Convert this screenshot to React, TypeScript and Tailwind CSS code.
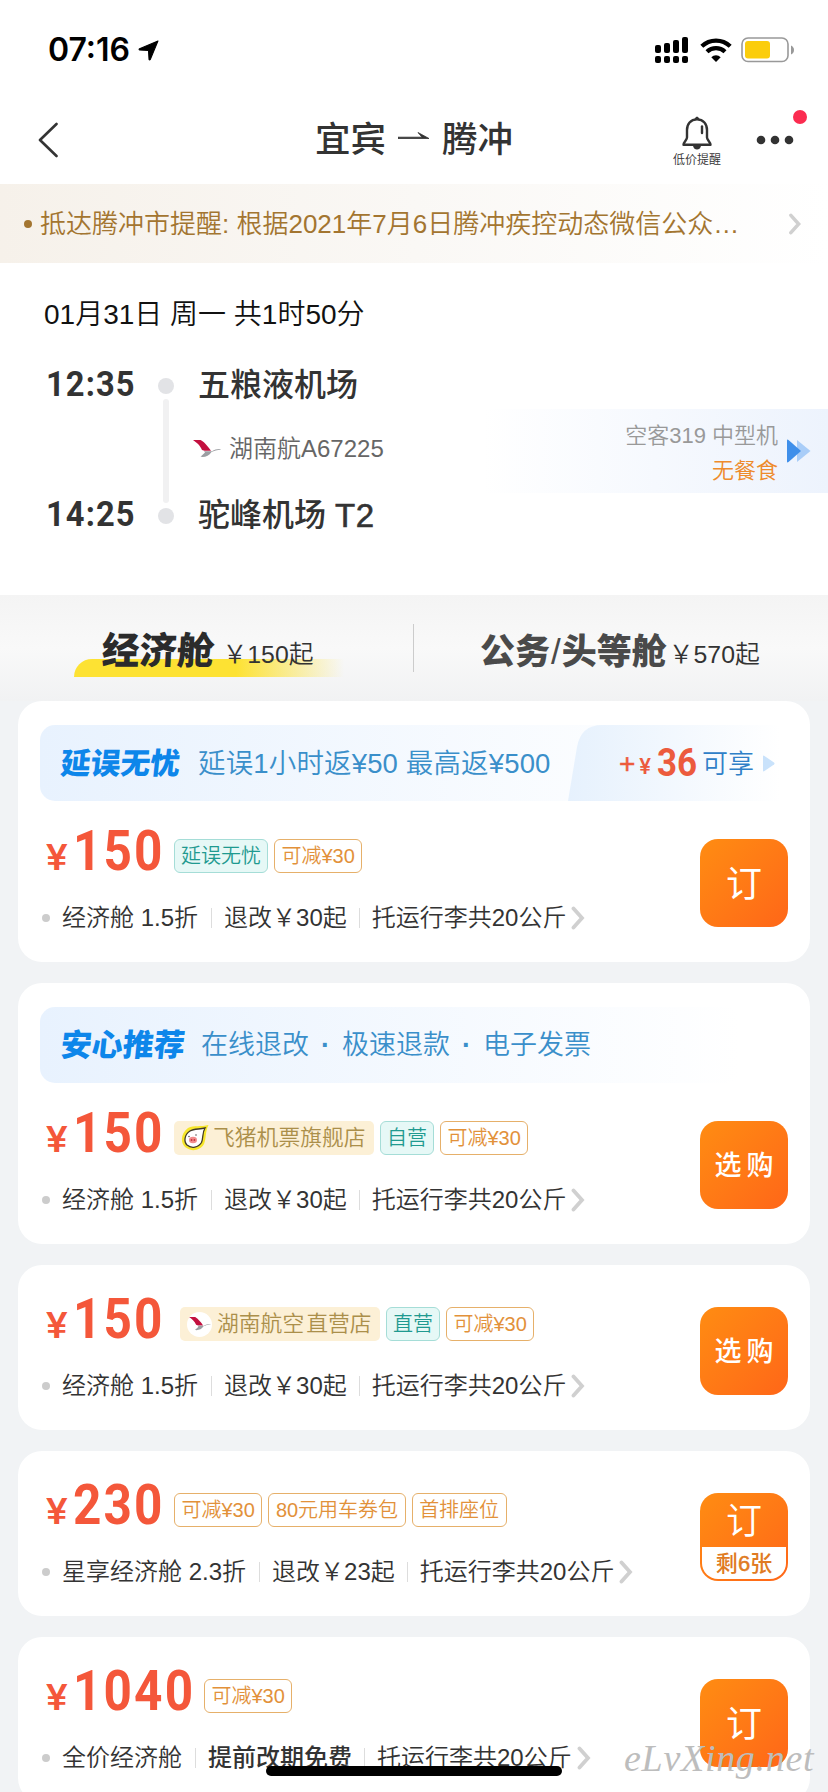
import React from "react";

type Tag = { text: string; kind: "teal" | "orange" | "pig" | "airline" };

type Fare = {
  price: string;
  tags: Tag[];
  cabin: string;
  refund: string;
  refundBold?: boolean;
  action: string;
  left?: string;
  banner?: "delay" | "recommend";
  shiftTags?: boolean;
};

const fares: Fare[] = [
  {
    price: "150",
    tags: [
      { text: "延误无忧", kind: "teal" },
      { text: "可减¥30", kind: "orange" },
    ],
    cabin: "经济舱 1.5折",
    refund: "退改￥30起",
    action: "订",
    banner: "delay",
  },
  {
    price: "150",
    tags: [
      { text: "飞猪机票旗舰店", kind: "pig" },
      { text: "自营", kind: "teal" },
      { text: "可减¥30", kind: "orange" },
    ],
    cabin: "经济舱 1.5折",
    refund: "退改￥30起",
    action: "选购",
    banner: "recommend",
  },
  {
    price: "150",
    tags: [
      { text: "湖南航空 直营店", kind: "airline" },
      { text: "直营", kind: "teal" },
      { text: "可减¥30", kind: "orange" },
    ],
    cabin: "经济舱 1.5折",
    refund: "退改￥30起",
    action: "选购",
    shiftTags: true,
  },
  {
    price: "230",
    tags: [
      { text: "可减¥30", kind: "orange" },
      { text: "80元用车券包", kind: "orange" },
      { text: "首排座位", kind: "orange" },
    ],
    cabin: "星享经济舱 2.3折",
    refund: "退改￥23起",
    action: "订",
    left: "剩6张",
  },
  {
    price: "1040",
    tags: [{ text: "可减¥30", kind: "orange" }],
    cabin: "全价经济舱",
    refund: "提前改期免费",
    refundBold: true,
    action: "订",
  },
];

function Chevron({ className }: { className?: string }) {
  return (
    <svg viewBox="0 0 14 24" className={className} fill="none" stroke="#d0d0d0" strokeWidth="3.8" strokeLinecap="round">
      <path d="M2.5 2.5 L11 12 L2.5 21.5" />
    </svg>
  );
}

function AirlineLogo({ className }: { className?: string }) {
  return (
    <svg viewBox="0 0 28 18" className={className}>
      <path d="M0 0 H7.500 C9.500 0.500 15 6 18 10.800 H11.500 L9 10 C7 5 3.500 2.500 0 0 Z" fill="#c3103f" />
      <path d="M11 11.2 H19 C22 9.5 26 8.5 28 9.4 C24 9.8 21 11 18.5 12 C16 16 12 17.4 7.5 16.8 L12 12.6 Z" fill="#9b9ea2" />
    </svg>
  );
}

function PigLogo({ className }: { className?: string }) {
  return (
    <svg viewBox="0 0 28 26" className={className}>
      <path d="M27.500 0 C20 2 13 0 7 3 C0 8 -1 17 4 22 C10 27 19 26 23 19 C25.500 13 24 7 27.500 0 Z" fill="#f6e62a" />
      <path d="M24 3 C18 4.500 13 3.500 9 6 C3.500 9.500 2.500 16.500 6 20 C10.500 24 17.500 22.500 20.500 17.500 C22.500 13 21 8 24 3 Z" fill="#fff" stroke="#413a28" strokeWidth="1.3" />
      <ellipse cx="12" cy="15" rx="4" ry="3.2" fill="#f28b8b" />
      <circle cx="10.600" cy="15" r="0.9" fill="#c2353b" />
      <circle cx="13.400" cy="15" r="0.9" fill="#c2353b" />
      <circle cx="8" cy="11.500" r="0.7" fill="#333" />
      <circle cx="15" cy="10" r="0.7" fill="#333" />
    </svg>
  );
}

function StatusBar() {
  return (
    <div className="flex h-[100px] items-center pl-[48px] pr-[33px]">
      <span className="w-[84px] whitespace-nowrap font-['Inter',sans-serif] text-[32px] font-semibold leading-none text-black">
        07:16
      </span>
      <svg viewBox="0 0 20 20" className="ml-[6px] h-[21px] w-[21px]">
        <path d="M19 1 L1.500 8.300 Q0.500 9 1.500 9.500 L10 10 L10.500 18.500 Q11 19.500 11.700 18.500 Z" fill="#000" stroke="#000" strokeLinejoin="round" />
      </svg>
      <div className="flex-1" />
      <svg viewBox="0 0 33 26" className="h-[26px] w-[33px]">
        <rect x="0" y="8" width="6" height="8" rx="2" />
        <rect x="9" y="6" width="6" height="10" rx="2" />
        <rect x="18" y="3" width="6" height="13" rx="2" />
        <rect x="27" y="0" width="6" height="16" rx="2" />
        <rect x="0" y="19" width="6" height="7" rx="2" />
        <rect x="9" y="19" width="6" height="7" rx="2" />
        <rect x="18" y="19" width="6" height="7" rx="2" />
        <rect x="27" y="19" width="6" height="7" rx="2" />
      </svg>
      <svg viewBox="0 0 32 24" className="ml-[12px] h-[24px] w-[32px]" fill="none" stroke="#000" strokeWidth="4.200">
        <path d="M1.800 8.300 A20.500 20.500 0 0 1 30.200 8.300" />
        <path d="M7 13.800 A13 13 0 0 1 25 13.800" />
        <path d="M16 24 L11.300 19.300 A6.700 6.700 0 0 1 20.700 19.300 Z" fill="#000" stroke="none" />
      </svg>
      <svg viewBox="0 0 54 26" className="ml-[9px] h-[26px] w-[54px]">
        <rect x="1" y="1" width="46" height="23.500" rx="6" fill="none" stroke="#999" strokeWidth="1.600" />
        <rect x="4" y="4" width="25" height="17.500" rx="3" fill="#fbcd0b" />
        <path d="M50 8.500 Q53 10 53 13 Q53 16 50 17.500 Z" fill="#999" />
      </svg>
    </div>
  );
}

function NavBar() {
  return (
    <div className="flex h-[84px] pl-[38px]">
      <svg viewBox="0 0 20 36" className="mt-[22px] h-[36px] w-[20px]" fill="none" stroke="#333" strokeWidth="2.600" strokeLinecap="round" strokeLinejoin="round">
        <path d="M18.500 2 L2 18 L18.500 34" />
      </svg>
      <div className="ml-[257px] flex h-[78px] items-center text-[35.500px] font-medium leading-none text-[#333]">
        <span className="pt-[4px]">宜宾</span>
        <svg viewBox="0 0 32 10" className="mb-[4px] ml-[12px] mr-[12px] h-[10px] w-[32px]">
          <path d="M0 6.500 H31 L20 0.500 L24 5.200 H0 Z" fill="#333" stroke="#333" strokeWidth="0.800" />
        </svg>
        <span className="pt-[4px]">腾冲</span>
      </div>
      <div className="ml-[159px] flex w-[50px] flex-col items-center pt-[16px]">
        <svg viewBox="0 0 30 34" className="h-[34px] w-[30px] shrink-0" fill="none" stroke="#333" strokeWidth="2.400" strokeLinejoin="round">
          <path d="M15 3.400 C8.500 3.400 5 8 5 14 V21.500 C5 24 1.500 26 1.500 28.800 H28.500 C28.500 26 25 24 25 21.500 V14 C25 8 21.500 3.400 15 3.400 Z" />
          <path d="M20 10.500 V17" strokeLinecap="round" />
          <path d="M12.500 3 Q15 -2 17.500 3 Z" fill="#333" stroke="none" />
          <path d="M11 30 H19 Q18 33.500 15 33.500 Q12 33.500 11 30 Z" fill="#333" stroke="none" />
        </svg>
        <span className="mt-[3px] whitespace-nowrap text-[12px] leading-[14px] text-[#333]">低价提醒</span>
      </div>
      <svg viewBox="0 0 70 50" className="ml-[24px] mt-[5px] h-[50px] w-[70px]">
        <circle cx="15" cy="35" r="4.300" fill="#333" />
        <circle cx="29" cy="35" r="4.300" fill="#333" />
        <circle cx="43" cy="35" r="4.300" fill="#333" />
        <circle cx="54" cy="12" r="7" fill="#fb2c50" />
      </svg>
    </div>
  );
}

function Notice() {
  return (
    <div className="flex h-[79px] items-center bg-gradient-to-r from-[#f6f1ea] via-[#faf8f5] to-white pl-[24px] pr-[26px]">
      <span className="mr-[8px] h-[8px] w-[8px] rounded-full bg-[#a37530]" />
      <span className="flex-1 whitespace-nowrap text-[26px] leading-none text-[#a37530]">
        抵达腾冲市提醒: 根据2021年7月6日腾冲疾控动态微信公众…
      </span>
      <Chevron className="h-[22px] w-[14px]" />
    </div>
  );
}

function FlightInfo() {
  return (
    <div className="h-[332px] pt-[36px]">
      <div className="flex h-[32px] items-center pl-[44px] text-[28px] leading-none text-[#111]">01月31日 周一 共1时50分</div>
      <div className="mt-[35px] flex">
        <div className="-mt-[2px] flex h-[170px] w-[110px] flex-col justify-between pl-[46px] font-['Roboto',sans-serif] text-[35.500px] font-bold leading-[40px] tracking-[1.200px] text-[#333]">
          <span className="origin-left scale-x-92">12:35</span>
          <span className="origin-left scale-x-92">14:25</span>
        </div>
        <div className="ml-[48px] flex w-[16px] flex-col items-center pt-[12px]">
          <span className="h-[16px] w-[16px] rounded-full bg-[#e2e3e6]" />
          <span className="my-[5px] h-[104px] w-[6px] rounded-sm bg-[#f1f1f2]" />
          <span className="h-[16px] w-[16px] rounded-full bg-[#e2e3e6]" />
        </div>
        <div className="ml-[19px] w-[290px]">
          <div className="flex h-[38px] items-center pl-[5px] text-[32px] font-medium leading-none text-[#333]">五粮液机场</div>
          <div className="mt-[29px] flex h-[32px] items-center">
            <AirlineLogo className="h-[18px] w-[28px]" />
            <span className="ml-[8px] whitespace-nowrap text-[24px] leading-none text-[#666]">湖南航A67225</span>
          </div>
          <div className="mt-[30px] flex h-[40px] items-center pl-[5px] text-[32px] font-medium leading-none text-[#333]">
            驼峰机场
            <span className="ml-[9px] text-[33px] tracking-[0.500px] [-webkit-text-stroke:0.600px_#333]">T2</span>
          </div>
        </div>
        <div className="mt-[43px] flex h-[84px] flex-1 items-center justify-end bg-gradient-to-r from-white to-[#edf3fd] pr-[17px]">
          <div className="flex flex-col items-end gap-[13px] whitespace-nowrap pt-[5px] text-[22px] leading-none">
            <span className="text-[#999]">空客319 中型机</span>
            <span className="text-[#ee8b2c]">无餐食</span>
          </div>
          <svg viewBox="0 0 24 24" className="ml-[9px] h-[24px] w-[24px]">
            <path d="M10 1 L23.500 12 L10 23 Z" fill="#a9cdf8" />
            <path d="M0 1.500 Q0 0 1.500 1 L14 12 L1.500 23 Q0 24 0 22.500 Z" fill="#3f8fea" />
          </svg>
        </div>
      </div>
    </div>
  );
}

function CabinTabs() {
  return (
    <div className="flex h-[106px] items-center bg-gradient-to-b from-[#f4f4f4] via-[#f9f9f9] to-[#f1f2f3]">
      <div className="relative flex w-[413px] items-center pl-[102px] pt-[7px]">
        <div className="absolute left-[74px] top-[33px] h-[18px] w-[270px] rounded-tl-[19px] bg-gradient-to-r from-[#fde233] via-[#fde233] via-60% to-transparent" />
        <span className="relative -skew-x-3 text-[37.500px] font-black leading-none text-[#2b2b2b]">经济舱</span>
        <span className="relative ml-[8px] mt-[8px] text-[24.800px] leading-none text-[#333]">￥150起</span>
      </div>
      <div className="h-[48px] w-px bg-[#ccc]" />
      <div className="flex items-center pl-[66px] pt-[7px]">
        <span className="text-[35px] font-black leading-none text-[#4a4a4a]">
          公务<span className="mx-[1px] font-normal">/</span>头等舱
        </span>
        <span className="ml-[2px] mt-[8px] text-[24.800px] leading-none text-[#333]">￥570起</span>
      </div>
    </div>
  );
}

function DelayBanner() {
  return (
    <div className="mx-[22px] mt-[24px] flex h-[76px] items-center rounded-[15px] bg-gradient-to-r from-[#e8f2fe] to-white to-90%">
      <span className="w-[158px] -skew-x-6 whitespace-nowrap pl-[21px] pt-[2px] text-[29.800px] font-black leading-none text-[#0d86ea]">延误无忧</span>
      <span className="w-[370px] whitespace-nowrap pt-[2px] text-[27.500px] leading-none tracking-[0.150px] text-[#3a8fca]">延误1小时返¥50 最高返¥500</span>
      <div className="relative flex h-[76px] w-[212px] items-center">
        <svg viewBox="0 0 212 76" className="absolute left-0 top-0 h-[76px] w-[212px]">
          <defs>
            <linearGradient id="perk" x1="0" x2="1">
              <stop offset="0" stopColor="#e6f1fd" />
              <stop offset="1" stopColor="#ffffff" />
            </linearGradient>
          </defs>
          <path d="M0 76 L9 22 Q13 0 34 0 H212 V76 Z" fill="url(#perk)" />
        </svg>
        <span className="relative ml-[51px] mt-[2px] text-[28px] leading-none text-[#ec5b3d] [-webkit-text-stroke:0.500px_#ec5b3d]">+</span>
        <span className="relative ml-[4px] mt-[8px] font-['Roboto',sans-serif] text-[22px] font-medium leading-none text-[#ec5b3d]">¥</span>
        <span className="relative ml-[6px] w-[43px] origin-left scale-x-92 font-['Roboto',sans-serif] text-[38px] font-bold leading-none text-[#ec5b3d]">36</span>
        <span className="relative ml-[2px] pt-[2px] text-[26px] leading-none text-[#2f80c8]">可享</span>
        <svg viewBox="0 0 12 17" className="relative ml-[9px] h-[17px] w-[12px]">
          <path d="M0 1.500 Q0 0 1.500 1 L11 7.500 Q12 8.500 11 9.500 L1.500 16 Q0 17 0 15.500 Z" fill="#c9e2fb" />
        </svg>
      </div>
    </div>
  );
}

function RecommendBanner() {
  return (
    <div className="mx-[22px] mt-[24px] flex h-[76px] w-[700px] items-center rounded-[15px] bg-gradient-to-r from-[#e8f2fe] to-white">
      <span className="w-[161px] -skew-x-6 whitespace-nowrap pl-[21px] pt-[1px] text-[31px] font-black leading-none text-[#0d86ea]">安心推荐</span>
      <span className="flex whitespace-nowrap pt-[1px] text-[27px] leading-none text-[#3a8fca]">
        在线退改<span className="w-[33px] text-center font-bold">·</span>极速退款<span className="w-[33px] text-center font-bold">·</span>电子发票
      </span>
    </div>
  );
}

function FareTag({ tag }: { tag: Tag }) {
  if (tag.kind === "pig" || tag.kind === "airline") {
    return (
      <span className="flex h-[34px] w-[200px] items-center whitespace-nowrap rounded-[5px] bg-[#fcf0d6] pl-[7px] leading-none text-[#ab8f4a]">
        {tag.kind === "pig" ? (
          <PigLogo className="mr-[4px] h-[26px] w-[28px]" />
        ) : (
          <span className="mr-[5px] flex h-[25px] w-[25px] items-center justify-center rounded-full bg-white">
            <AirlineLogo className="h-[14px] w-[22px]" />
          </span>
        )}
        <span className="text-[21.800px]">{tag.kind === "pig" ? tag.text : <>湖南航空<span className="ml-[2px]">直营店</span></>}</span>
      </span>
    );
  }
  return (
    <span
      className={
        tag.kind === "teal"
          ? "flex h-[34px] items-center whitespace-nowrap rounded-[6px] border border-[#a5ddd7] bg-[#e6f8f6] px-[6px] text-[20px] leading-none text-[#1f9a90]"
          : "flex h-[34px] items-center whitespace-nowrap rounded-[6px] border border-[#e6b06a] px-[6.500px] text-[20px] leading-none text-[#e2913a]"
      }
    >
      {tag.text}
    </span>
  );
}

function BuyButton({ fare }: { fare: Fare }) {
  if (fare.left) {
    return (
      <div className="mt-[42px] flex h-[88px] w-[88px] flex-col rounded-[18px] bg-gradient-to-br from-[#ff8c12] to-[#ff6618] p-[2px] pt-0 text-center">
        <span className="h-[54px] pt-[2px] text-[36px] leading-[54px] text-white">{fare.action}</span>
        <span className="h-[32px] rounded-b-[16px] bg-white text-[22px] font-medium leading-[33px] text-[#e07a22]">
          剩<span className="[-webkit-text-stroke:0.500px_#e07a22]">6</span>张
        </span>
      </div>
    );
  }
  return (
    <div className="mt-[42px] flex h-[88px] w-[88px] items-center justify-center rounded-[18px] bg-gradient-to-br from-[#ff8c12] to-[#ff6618] text-white">
      {fare.action.length > 1 ? (
        <span className="pl-[5px] pt-[3px] text-[27px] font-medium leading-none tracking-[5px]">{fare.action}</span>
      ) : (
        <span className="pt-[4px] text-[36px] font-normal leading-none">{fare.action}</span>
      )}
    </div>
  );
}

function FareCard({ fare }: { fare: Fare }) {
  return (
    <div className="shrink-0 rounded-[24px] bg-white">
      {fare.banner === "delay" && <DelayBanner />}
      {fare.banner === "recommend" && <RecommendBanner />}
      <div className={fare.banner ? "-mt-[4px] flex h-[165px] pr-[22px]" : "flex h-[165px] pr-[22px]"}>
        <div className="flex-1 pl-[26px] pt-[28px]">
          <div className="flex h-[48px] items-end">
            <div className="-mb-[3px] flex items-baseline font-['Roboto',sans-serif] leading-[45px] text-[#f4573a]">
              <span className="ml-[2px] w-[27px] origin-left scale-x-110 text-[37px] font-medium leading-none">¥</span>
              <span
                className={
                  fare.price.length > 3
                    ? "w-[119px] origin-left scale-x-90 text-[55px] font-bold leading-[45px] tracking-[2.400px]"
                    : "w-[89px] origin-left scale-x-90 text-[55px] font-bold leading-[45px] tracking-[2.400px]"
                }
              >
                {fare.price}
              </span>
            </div>
            <div className={fare.shiftTags ? "ml-[18px] flex gap-[6px]" : "ml-[12px] flex gap-[6px]"}>
              {fare.tags.map((tag) => (
                <FareTag key={tag.text} tag={tag} />
              ))}
            </div>
          </div>
          <div className="mt-[29px] flex h-[32px] items-center whitespace-nowrap text-[24px] leading-none text-[#333]">
            <span className="-ml-[2px] mr-[12px] h-[8px] w-[8px] rounded-full bg-[#ccc]" />
            <span>{fare.cabin}</span>
            <span className="ml-[13px] mr-[12px] h-[20px] w-px bg-[#ddd]" />
            <span className={fare.refundBold ? "font-medium" : ""}>{fare.refund}</span>
            <span className="ml-[12px] mr-[12px] h-[20px] w-px bg-[#ddd]" />
            <span>托运行李共20公斤</span>
            <Chevron className="ml-[5px] h-[24px] w-[14px]" />
          </div>
        </div>
        <BuyButton fare={fare} />
      </div>
    </div>
  );
}

export default function App() {
  return (
    <div className="relative flex h-[1792px] w-[828px] flex-col overflow-hidden bg-[#f1f3f5] font-['Liberation_Sans','Noto_Sans_CJK_SC',sans-serif] font-[350]">
      <div className="shrink-0 bg-white">
        <StatusBar />
        <NavBar />
        <Notice />
        <FlightInfo />
      </div>
      <div className="shrink-0">
        <CabinTabs />
      </div>
      <div className="flex flex-col gap-[21px] px-[18px]">
        {fares.map((fare, i) => (
          <FareCard key={i} fare={fare} />
        ))}
      </div>

      {/* home indicator and site mark float over the list */}
      <div className="absolute left-[266px] top-[1766px] h-[10px] w-[296px] rounded-full bg-black" />
      <div className="absolute left-[624px] top-[1743px] h-[36px] whitespace-nowrap font-['Liberation_Serif',serif] text-[38px] italic leading-[30px] tracking-[0.700px] text-[#bdbdbd]">
        eLvXing.net
      </div>
    </div>
  );
}
